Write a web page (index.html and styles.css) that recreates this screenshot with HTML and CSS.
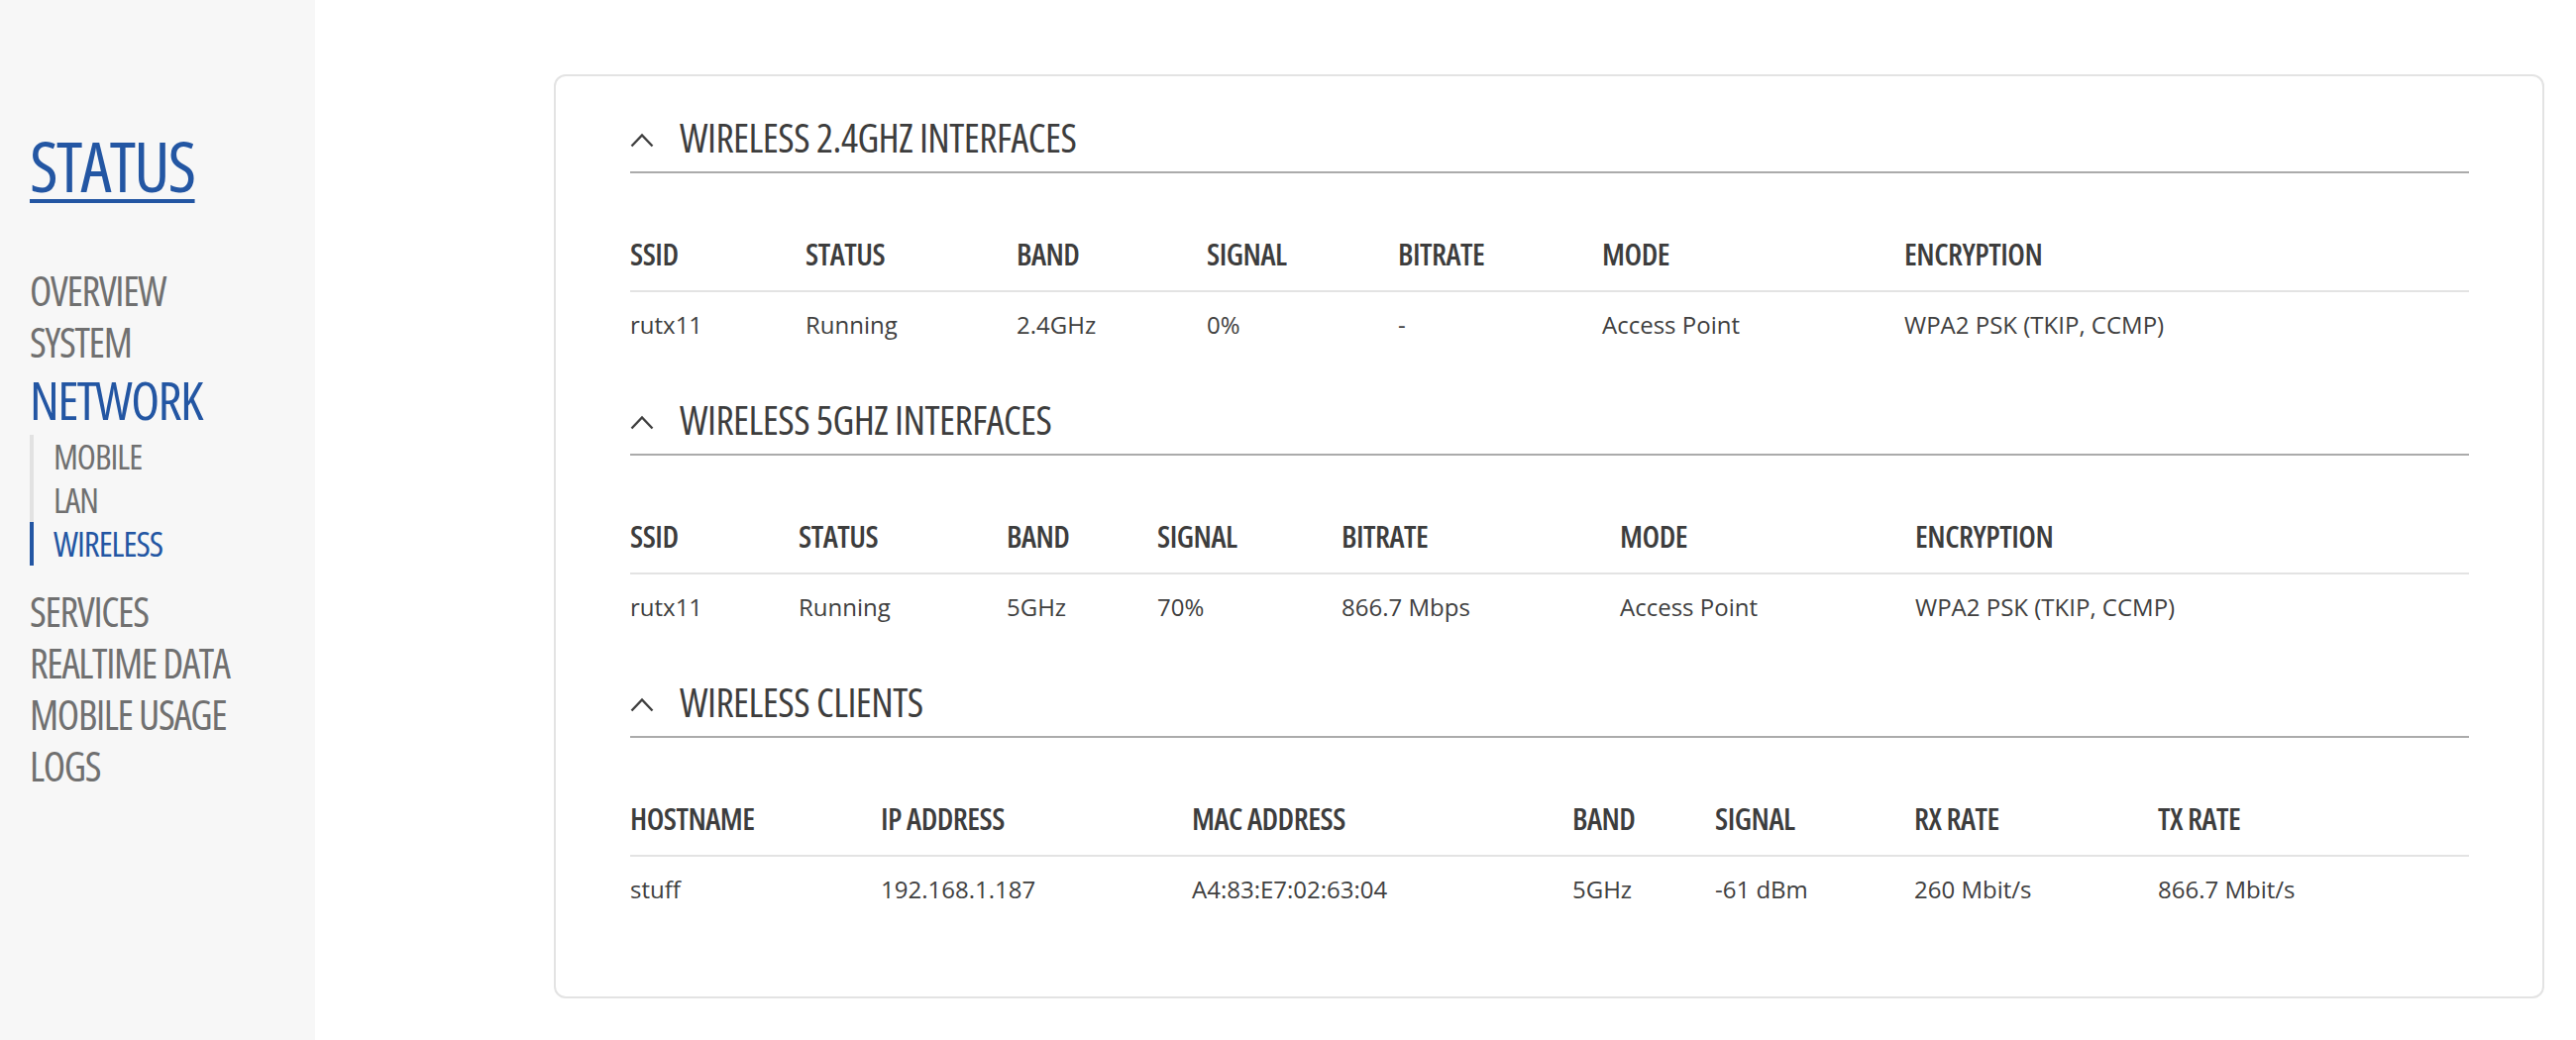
FILE: index.html
```html
<!DOCTYPE html>
<html lang="en">
<head>
<meta charset="utf-8">
<title>Status - Wireless</title>
<link rel="stylesheet" href="styles.css">
</head>
<body>
<div class="layout">
  <aside class="sidebar">
    <div class="side-head"><a class="side-title" href="#">STATUS</a></div>
    <ul class="menu">
      <li class="menu-item">OVERVIEW</li>
      <li class="menu-item">SYSTEM</li>
      <li class="menu-item menu-item-active">NETWORK</li>
      <li class="submenu-wrap">
        <ul class="submenu">
          <li class="sub-item">MOBILE</li>
          <li class="sub-item">LAN</li>
          <li class="sub-item sub-item-active">WIRELESS</li>
        </ul>
      </li>
      <li class="menu-item menu-after-sub">SERVICES</li>
      <li class="menu-item">REALTIME DATA</li>
      <li class="menu-item">MOBILE USAGE</li>
      <li class="menu-item">LOGS</li>
    </ul>
  </aside>

  <main class="main">
    <div class="card">

      <section class="section">
        <h2 class="section-title">
          <svg class="chevron" viewBox="0 0 24 15" width="24" height="15"><path d="M1.5 13.5 L12 2.5 L22.5 13.5" fill="none" stroke="#404040" stroke-width="2.4"/></svg>
          <span>WIRELESS 2.4GHZ INTERFACES</span>
        </h2>
        <table class="data t-24">
          <colgroup><col><col><col><col><col><col><col></colgroup>
          <thead>
            <tr><th>SSID</th><th>STATUS</th><th>BAND</th><th>SIGNAL</th><th>BITRATE</th><th>MODE</th><th>ENCRYPTION</th></tr>
          </thead>
          <tbody>
            <tr><td>rutx11</td><td>Running</td><td>2.4GHz</td><td>0%</td><td>-</td><td>Access Point</td><td>WPA2 PSK (TKIP, CCMP)</td></tr>
          </tbody>
        </table>
      </section>

      <section class="section">
        <h2 class="section-title">
          <svg class="chevron" viewBox="0 0 24 15" width="24" height="15"><path d="M1.5 13.5 L12 2.5 L22.5 13.5" fill="none" stroke="#404040" stroke-width="2.4"/></svg>
          <span>WIRELESS 5GHZ INTERFACES</span>
        </h2>
        <table class="data t-5">
          <colgroup><col><col><col><col><col><col><col></colgroup>
          <thead>
            <tr><th>SSID</th><th>STATUS</th><th>BAND</th><th>SIGNAL</th><th>BITRATE</th><th>MODE</th><th>ENCRYPTION</th></tr>
          </thead>
          <tbody>
            <tr><td>rutx11</td><td>Running</td><td>5GHz</td><td>70%</td><td>866.7 Mbps</td><td>Access Point</td><td>WPA2 PSK (TKIP, CCMP)</td></tr>
          </tbody>
        </table>
      </section>

      <section class="section">
        <h2 class="section-title">
          <svg class="chevron" viewBox="0 0 24 15" width="24" height="15"><path d="M1.5 13.5 L12 2.5 L22.5 13.5" fill="none" stroke="#404040" stroke-width="2.4"/></svg>
          <span>WIRELESS CLIENTS</span>
        </h2>
        <table class="data t-cl">
          <colgroup><col><col><col><col><col><col><col></colgroup>
          <thead>
            <tr><th>HOSTNAME</th><th>IP ADDRESS</th><th>MAC ADDRESS</th><th>BAND</th><th>SIGNAL</th><th>RX RATE</th><th>TX RATE</th></tr>
          </thead>
          <tbody>
            <tr><td>stuff</td><td>192.168.1.187</td><td>A4:83:E7:02:63:04</td><td>5GHz</td><td>-61 dBm</td><td>260 Mbit/s</td><td>866.7 Mbit/s</td></tr>
          </tbody>
        </table>
      </section>

    </div>
  </main>
</div>
</body>
</html>
```
FILE: styles.css
```css
html, body {
  margin: 0;
  padding: 0;
  background: #ffffff;
}

body {
  font-family: "Open Sans", "Noto Sans", "Liberation Sans", sans-serif;
  color: #404040;
}

.layout {
  display: flex;
  min-height: 1050px;
}

/* ---------- Sidebar ---------- */
.sidebar {
  width: 318px;
  flex: 0 0 318px;
  background: #f7f7f7;
  padding: 0 0 0 30px;
  box-sizing: border-box;
  font-family: "Open Sans", sans-serif;
  font-stretch: 75%;
  font-weight: 500;
}

.side-head {
  padding-top: 122px;
  height: 90px;
  line-height: 90px;
}

.side-title {
  font-size: 70px;
  line-height: 90px;
  color: #2356a3;
  text-decoration: underline;
  text-decoration-thickness: 4px;
  text-underline-offset: 7px;
  letter-spacing: -1.8px;
}

.menu {
  list-style: none;
  margin: 55px 0 0 0;
  padding: 0;
}

.menu-item {
  font-size: 41px;
  line-height: 52px;
  height: 52px;
  color: #707070;
  letter-spacing: -1.3px;
}

.menu-item-active {
  font-size: 53px;
  line-height: 66px;
  height: 66px;
  color: #2356a3;
  letter-spacing: -1.6px;
}

.submenu-wrap {
  padding-top: 2px;
}

.submenu {
  list-style: none;
  margin: 0;
  padding: 0;
}

.sub-item {
  font-size: 35px;
  line-height: 44px;
  height: 44px;
  color: #707070;
  border-left: 4px solid #e2e2e2;
  padding-left: 20px;
  letter-spacing: -1px;
}

.sub-item-active {
  color: #2356a3;
  border-left-color: #2356a3;
}

.menu-after-sub {
  margin-top: 20px;
}

/* ---------- Main ---------- */
.main {
  flex: 1;
  padding: 75px 32px 44px 241px;
}

.card {
  border: 2px solid #e3e3e3;
  border-radius: 12px;
  padding: 37px 74px 37px 75px;
}

.section {
  margin-bottom: 54px;
}

.section-title {
  display: flex;
  align-items: center;
  gap: 26px;
  margin: 0;
  padding-bottom: 9px;
  border-bottom: 2px solid #ababab;
  font-family: "Open Sans", sans-serif;
  font-stretch: 75%;
  font-weight: 500;
  font-size: 40px;
  line-height: 50px;
  color: #3d3d3d;
  letter-spacing: -0.5px;
}

.chevron {
  flex: 0 0 auto;
  margin-top: 4px;
}

/* ---------- Tables ---------- */
.data {
  width: 100%;
  table-layout: fixed;
  border-collapse: collapse;
  margin-top: 61px;
}

.data th {
  text-align: left;
  font-family: "Open Sans", sans-serif;
  font-stretch: 75%;
  font-weight: 600;
  font-size: 31px;
  line-height: 40px;
  color: #3d3d3d;
  padding: 0 0 17px 0;
  border-bottom: 2px solid #e3e3e3;
  letter-spacing: -0.5px;
}

.data td {
  font-size: 24px;
  line-height: 34px;
  padding: 16px 0 0 0;
  color: #404040;
  white-space: nowrap;
}

.t-24 col:nth-child(1) { width: 177px; }
.t-24 col:nth-child(2) { width: 213px; }
.t-24 col:nth-child(3) { width: 192px; }
.t-24 col:nth-child(4) { width: 193px; }
.t-24 col:nth-child(5) { width: 206px; }
.t-24 col:nth-child(6) { width: 305px; }
.t-24 col:nth-child(7) { width: auto; }

.t-5 col:nth-child(1) { width: 170px; }
.t-5 col:nth-child(2) { width: 210px; }
.t-5 col:nth-child(3) { width: 152px; }
.t-5 col:nth-child(4) { width: 186px; }
.t-5 col:nth-child(5) { width: 281px; }
.t-5 col:nth-child(6) { width: 298px; }
.t-5 col:nth-child(7) { width: auto; }

.t-cl col:nth-child(1) { width: 253px; }
.t-cl col:nth-child(2) { width: 314px; }
.t-cl col:nth-child(3) { width: 384px; }
.t-cl col:nth-child(4) { width: 144px; }
.t-cl col:nth-child(5) { width: 201px; }
.t-cl col:nth-child(6) { width: 246px; }
.t-cl col:nth-child(7) { width: auto; }
```
